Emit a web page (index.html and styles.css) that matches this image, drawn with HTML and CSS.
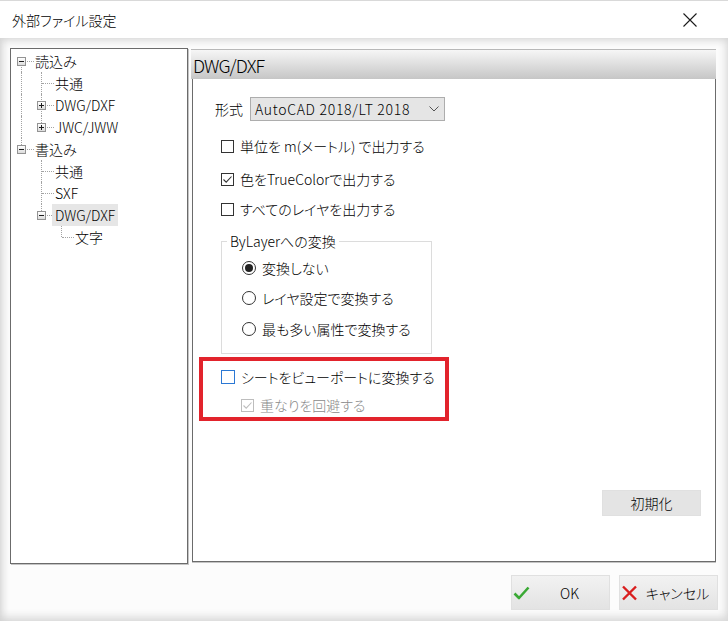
FILE: index.html
```html
<!DOCTYPE html>
<html lang="ja">
  <head>
    <meta charset="UTF-8" />
    <meta name="viewport" content="width=device-width, initial-scale=1.0" />
    <title>外部ファイル設定</title>
    <link rel="stylesheet" href="styles.css">
  </head>
  <body>
    <div class="window">
      <!-- Title bar -->
      <div class="titlebar">
        <span class="caption">外部ファイル設定</span>
        <svg class="close" width="14" height="14" viewBox="0 0 14 14">
          <path d="M0.5 0.5 L13.5 13.5 M13.5 0.5 L0.5 13.5" stroke="#1a1a1a" stroke-width="1.1" fill="none" />
        </svg>
      </div>

      <div class="client">
        <div class="main">
          <!-- Tree -->
          <div class="tree">
            <div class="node">
              <span class="joint first"><span class="exp"></span></span>
              <span class="label">読込み</span>
            </div>
            <div class="node">
              <span class="guide pipe"></span>
              <span class="joint"></span>
              <span class="label">共通</span>
            </div>
            <div class="node">
              <span class="guide pipe"></span>
              <span class="joint"><span class="exp plus"></span></span>
              <span class="label">DWG/DXF</span>
            </div>
            <div class="node">
              <span class="guide pipe"></span>
              <span class="joint last"><span class="exp plus"></span></span>
              <span class="label">JWC/JWW</span>
            </div>
            <div class="node">
              <span class="joint last"><span class="exp"></span></span>
              <span class="label">書込み</span>
            </div>
            <div class="node">
              <span class="guide"></span>
              <span class="joint"></span>
              <span class="label">共通</span>
            </div>
            <div class="node">
              <span class="guide"></span>
              <span class="joint"></span>
              <span class="label">SXF</span>
            </div>
            <div class="node">
              <span class="guide"></span>
              <span class="joint last"><span class="exp"></span></span>
              <span class="label selected">DWG/DXF</span>
            </div>
            <div class="node">
              <span class="guide"></span>
              <span class="guide"></span>
              <span class="joint last"></span>
              <span class="label">文字</span>
            </div>
          </div>

          <!-- Settings panel -->
          <div class="panel">
            <div class="panel-header">DWG/DXF</div>
            <div class="panel-body">
              <div class="format">
                <span>形式</span>
                <div class="select">
                  <span class="value">AutoCAD 2018/LT 2018</span>
                  <svg width="10" height="6" viewBox="0 0 10 6">
                    <path d="M0.5 0.5 L5 5 L9.5 0.5" stroke="#555" stroke-width="1" fill="none" />
                  </svg>
                </div>
              </div>

              <label class="check row1">
                <span class="box"></span>
                <span>単位を m(メートル) で出力する</span>
              </label>
              <label class="check row2">
                <span class="box">
                  <svg width="11" height="11" viewBox="0 0 11 11">
                    <path d="M1.5 5.5 L4.2 8.2 L9.5 2.5" stroke="#333" stroke-width="1.1" fill="none" />
                  </svg>
                </span>
                <span>色をTrueColorで出力する</span>
              </label>
              <label class="check row3">
                <span class="box"></span>
                <span>すべてのレイヤを出力する</span>
              </label>

              <fieldset class="group">
                <legend>ByLayerへの変換</legend>
                <label class="radio first">
                  <span class="dot on"></span>
                  <span>変換しない</span>
                </label>
                <label class="radio">
                  <span class="dot"></span>
                  <span>レイヤ設定で変換する</span>
                </label>
                <label class="radio third">
                  <span class="dot"></span>
                  <span>最も多い属性で変換する</span>
                </label>
              </fieldset>

              <div class="highlight">
                <label class="check">
                  <span class="box focus"></span>
                  <span>シートをビューポートに変換する</span>
                </label>
                <label class="check sub disabled">
                  <span class="box">
                    <svg width="11" height="11" viewBox="0 0 11 11">
                      <path d="M1.5 5.5 L4.2 8.2 L9.5 2.5" stroke="#bdbdbd" stroke-width="1.1" fill="none" />
                    </svg>
                  </span>
                  <span>重なりを回避する</span>
                </label>
              </div>

              <button class="btn init">初期化</button>
            </div>
          </div>
        </div>

        <!-- Dialog buttons -->
        <div class="footer">
          <button class="btn dialog">
            <svg width="17" height="16" viewBox="0 0 17 16">
              <path d="M1.5 8.5 L6 13 L15.5 2.5" stroke="#3aa935" stroke-width="2.6" fill="none" stroke-linejoin="round" />
            </svg>
            <span>OK</span>
          </button>
          <button class="btn dialog">
            <svg width="17" height="16" viewBox="0 0 17 16">
              <path d="M2 1.5 L15 14.5 M15 1.5 L2 14.5" stroke="#d91e1e" stroke-width="2.4" fill="none" />
            </svg>
            <span>キャンセル</span>
          </button>
        </div>
      </div>
    </div>
  </body>
</html>
```

FILE: styles.css
```css
* {
  box-sizing: border-box;
}
body {
  margin: 0;
  font-family: "Noto Sans CJK JP", "Noto Sans", sans-serif;
  font-size: 14px;
  font-weight: 300;
  font-feature-settings: "palt";
  color: #000;
  background: #fff;
}
.window {
  width: 728px;
  height: 621px;
  display: flex;
  flex-direction: column;
  overflow: hidden;
}
.titlebar {
  height: 38px;
  flex: none;
  display: flex;
  align-items: center;
  justify-content: space-between;
  padding: 0 31px 0 12px;
  background: #fff;
  border-top: 1px solid #d9d9d9;
}
.caption {
  font-size: 14px;
}
.client {
  flex: 1;
  display: flex;
  flex-direction: column;
  padding: 10px 0 0 10px;
  background: #fcfcfc;
  box-shadow: inset 0 8px 8px -6px #d4d4d4, inset 9px 0 9px -7px #d0d0d0, inset 0 -10px 8px -6px #d8d8d8, inset -9px 0 9px -7px #d8d8d8;
}
.main {
  display: flex;
  gap: 2px;
  height: 516px;
}

/* tree */
.tree {
  width: 178px;
  height: 516px;
  background: #fff;
  border: 1px solid #6b6b6b;
  box-shadow: 1px 1px 0 #c4c4c4;
  padding-top: 1px;
}
.node {
  display: flex;
  height: 22px;
}
.guide,
.joint {
  width: 20px;
  flex: none;
  position: relative;
}
.guide.pipe::before,
.joint::before {
  content: "";
  position: absolute;
  left: 10px;
  top: 0;
  bottom: 0;
  border-left: 1px dotted #a3a3a3;
}
.joint.first::before {
  top: 11px;
}
.joint.last::before {
  bottom: 11px;
}
.joint::after {
  content: "";
  position: absolute;
  left: 11px;
  right: -3px;
  top: 11px;
  border-top: 1px dotted #a3a3a3;
}
.exp {
  position: absolute;
  left: 6px;
  top: 7px;
  width: 9px;
  height: 9px;
  border: 1px solid #939393;
  background: linear-gradient(#ffffff, #dcdcdc);
  z-index: 1;
}
.exp::before {
  content: "";
  position: absolute;
  left: 1px;
  top: 3px;
  width: 5px;
  height: 1px;
  background: #1e1e1e;
}
.exp.plus::after {
  content: "";
  position: absolute;
  left: 3px;
  top: 1px;
  width: 1px;
  height: 5px;
  background: #1e1e1e;
}
.label {
  margin-left: 1px;
  padding: 0 3px;
  line-height: 22px;
  white-space: nowrap;
  position: relative;
  z-index: 1;
}
.label.selected {
  background: #e6e6e6;
}

/* right panel */
.panel {
  width: 526px;
  height: 513px;
  margin-top: 1px;
  display: flex;
  flex-direction: column;
}
.panel-header {
  height: 30px;
  flex: none;
  padding: 0 0 0 2px;
  margin-left: 1px;
  font-size: 18px;
  font-weight: 300;
  letter-spacing: -0.9px;
  line-height: 30px;
  background: linear-gradient(#f6f6f6, #c6c6c6);
  border-top: 1px solid #b8b8b8;
}
.panel-body {
  flex: 1;
  display: flex;
  flex-direction: column;
  align-items: flex-start;
  background: #fff;
  margin-left: 2px;
  border-left: 1px solid #6b6b6b;
  border-bottom: 1px solid #6b6b6b;
  border-right: 1px solid #6b6b6b;
  box-shadow: 0 1px 0 #c4c4c4;
  padding: 18px 0 0 22px;
}
.format {
  display: flex;
  align-items: center;
  gap: 7px;
}
.select {
  width: 195px;
  height: 24px;
  display: flex;
  align-items: center;
  justify-content: space-between;
  padding: 0 5px 0 4px;
  background: #e5e5e5;
  border: 1px solid #adadad;
}
.select .value {
  letter-spacing: 0.7px;
}
.check,
.radio {
  display: flex;
  align-items: center;
  height: 20px;
  gap: 6px;
  white-space: nowrap;
}
.check {
  margin-left: 6px;
}
.row1 {
  margin-top: 15px;
}
.row2 {
  margin-top: 13px;
}
.row3 {
  margin-top: 10px;
}
.box {
  width: 13px;
  height: 13px;
  border: 1px solid #333;
  background: #fff;
  display: flex;
  align-items: center;
  justify-content: center;
}
.box.focus {
  width: 14px;
  height: 14px;
  border-color: #2b78d4;
}
.group {
  margin: 12px 0 0 6px;
  width: 211px;
  padding: 0 0 14px 5px;
  border: 1px solid #dcdcdc;
}
.group legend {
  padding: 0 3px;
  line-height: 20px;
}
.radio {
  margin: 10px 0 0 15px;
}
.radio.first {
  margin-top: 7px;
}
.radio.third {
  margin-top: 11px;
}
.dot {
  width: 14px;
  height: 14px;
  border: 1px solid #333;
  border-radius: 50%;
  background: #fff;
  display: flex;
  align-items: center;
  justify-content: center;
}
.dot.on::before {
  content: "";
  width: 8px;
  height: 8px;
  border-radius: 50%;
  background: #222;
}
.highlight {
  margin: 3px 0 0 -16px;
  width: 250px;
  height: 64px;
  border: 4px solid #e2232c;
  padding: 6px 0 0 18px;
}
.highlight .check {
  margin-left: 0;
}
.check.sub {
  margin: 8px 0 0 20px;
}
.check.disabled {
  color: #8a8a8a;
}
.check.disabled .box {
  border-color: #bdbdbd;
}

/* buttons */
.btn {
  font-family: inherit;
  font-size: 14px;
  font-weight: 300;
  font-feature-settings: "palt";
  color: #000;
  background: linear-gradient(#f2f2f2, #e3e3e3);
  border: 1px solid #e0e0e0;
  padding: 0;
}
.init {
  width: 99px;
  height: 26px;
  align-self: flex-end;
  margin: auto 14px 45px 0;
  background: #e4e4e4;
}
.footer {
  display: flex;
  justify-content: flex-end;
  gap: 9px;
  padding-right: 10px;
  margin-top: 11px;
}
.dialog {
  width: 99px;
  height: 35px;
  display: flex;
  align-items: center;
  padding-left: 1px;
}
.dialog span {
  flex: 1;
  text-align: center;
}
```
